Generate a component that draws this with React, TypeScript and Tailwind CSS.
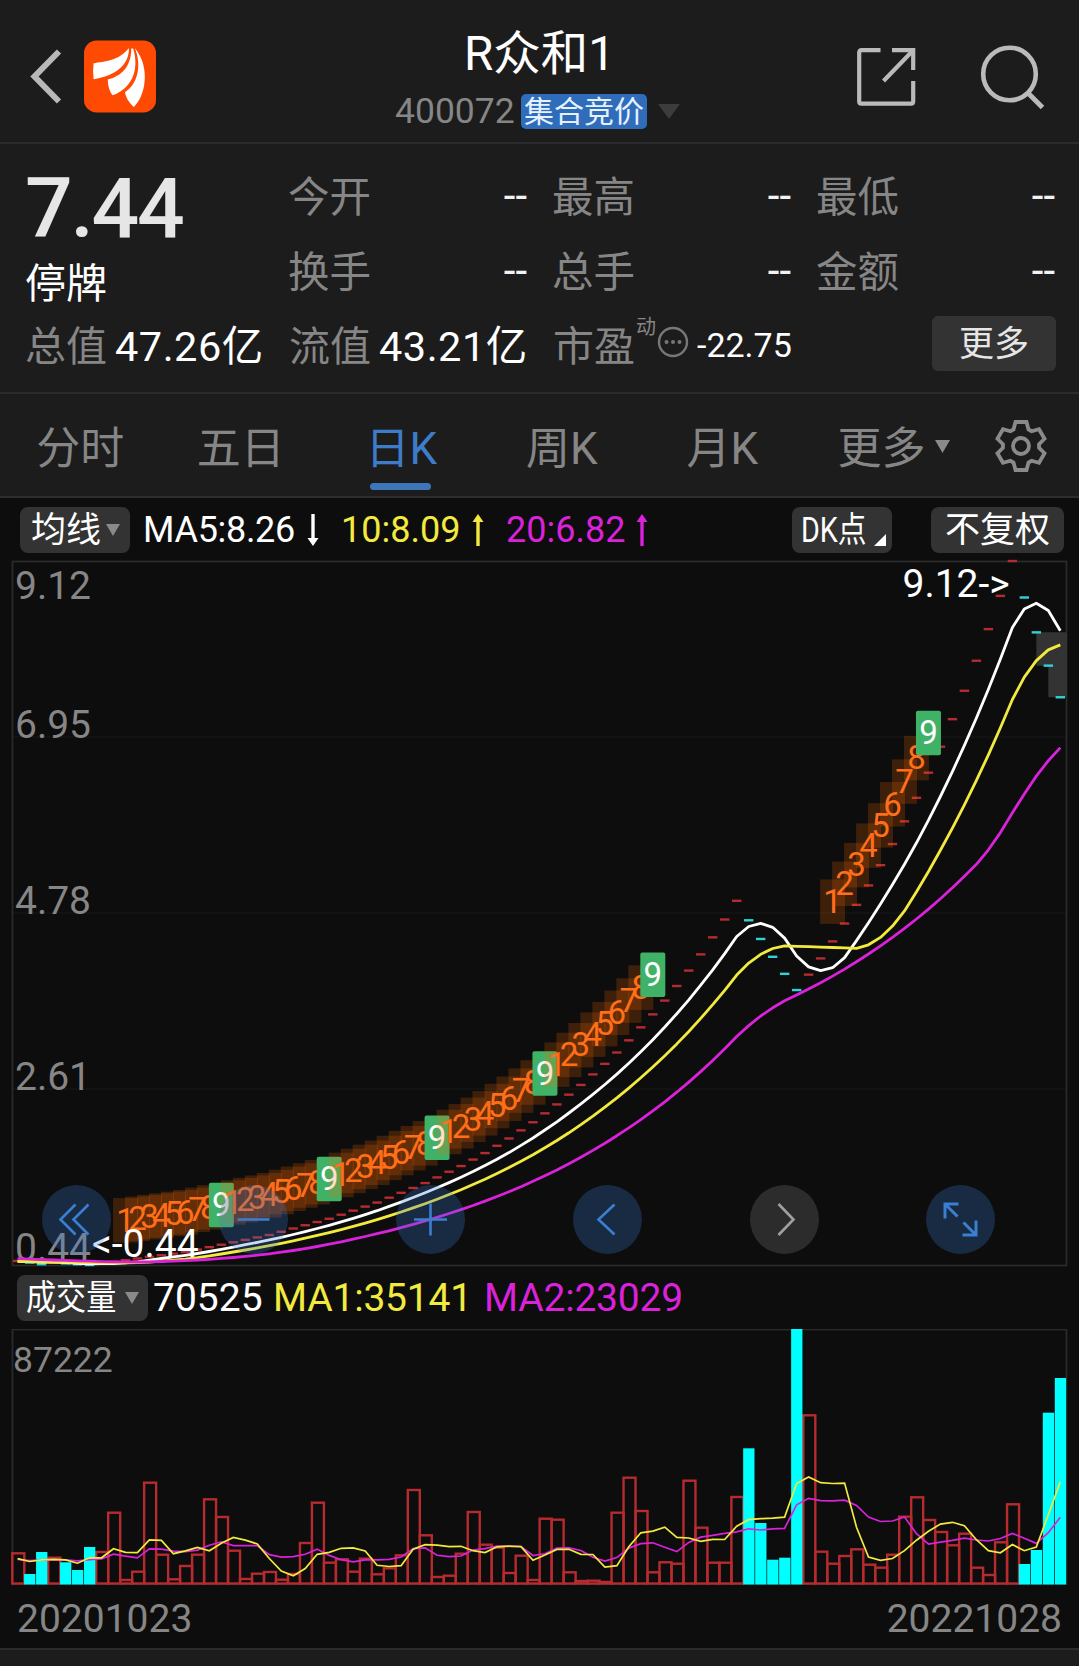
import type { ReactNode } from 'react';

const UP = '#b52b2f';
const DOWN = '#00ffff';
const YELLOW = '#f2ea3e';
const PINK = '#d922d9';

const BAR_STEP = 11.985;
const FIRST_X = 17.6;

const closes = [
  0.49, 0.47, 0.45, 0.47, 0.46, 0.45, 0.44, 0.46, 0.48, 0.5, 0.52, 0.54, 0.56, 0.58, 0.6, 0.63, 0.66, 0.69,
  0.72, 0.75, 0.78, 0.81, 0.85, 0.89, 0.93, 0.97, 1.01, 1.06, 1.11, 1.16, 1.21, 1.27, 1.33, 1.39, 1.45, 1.52,
  1.59, 1.66, 1.74, 1.82, 1.91, 2.0, 2.1, 2.2, 2.31, 2.42, 2.54, 2.66, 2.79, 2.92, 3.06, 3.21, 3.37, 3.53,
  3.7, 3.88, 4.07, 4.27, 4.48, 4.7, 4.93, 4.69, 4.46, 4.24, 4.03, 3.83, 4.02, 4.22, 4.43, 4.65, 4.88, 5.12,
  5.37, 5.63, 5.91, 6.2, 6.51, 6.83, 7.17, 7.52, 7.89, 8.28, 8.69, 9.12, 8.67, 8.24, 7.83, 7.44,
];

// closes before the first visible bar, needed by the moving averages
const prevCloses = [
  0.57, 0.57, 0.56, 0.56, 0.55, 0.55, 0.54, 0.54, 0.53, 0.53, 0.5, 0.49, 0.48, 0.48, 0.48, 0.48, 0.48, 0.48, 0.49,
];

// bar heights of the volume pane, in px (255 = 87222)
const volumes = [
  30.7, 10, 32, 26.3, 21.7, 14, 37, 32, 71.3, 4, 12.3, 101.3, 29.3, 4.7, 18, 29.3, 84.7, 67, 33.3, 5, 10.3, 12,
  4.3, 10, 41, 81.3, 21.3, 24.7, 12.3, 25.3, 9.7, 15.7, 28.7, 94, 48.7, 7, 8.3, 30.3, 72, 39.3, 36.3, 11, 28.3,
  4, 65.3, 64.3, 11.7, 3, 3.3, 2, 71.3, 106.3, 73, 11.7, 21.7, 20.3, 103.3, 56.3, 21.3, 21.3, 87, 135.7, 61,
  24.3, 26.3, 255, 168.7, 32.3, 20.3, 28, 34.7, 19.3, 16.3, 29.3, 67.3, 86.7, 64, 52, 38.7, 50.3, 16.3, 9, 41.7,
  79.7, 20, 34, 171.3, 206,
];

const downBars = new Set([1, 2, 4, 5, 6, 61, 62, 63, 64, 65, 84, 85, 86, 87]);
const countStarts = [9, 18, 27, 36, 45, 68];

const TABS = ['分时', '五日', '日K', '周K', '月K'];

const barX = (i: number) => FIRST_X + i * BAR_STEP;
const priceY = (p: number) => 704 - ((p - 0.44) * 704) / 8.68;

function average(data: number[], before: number[], n: number) {
  const all = [...before, ...data];
  return data.map((_, i) => {
    const end = i + before.length + 1;
    return all.slice(end - n, end).reduce((a, b) => a + b, 0) / n;
  });
}

function toPoints(values: number[], y: (v: number) => number) {
  return values.map((v, i) => `${barX(i).toFixed(1)},${y(v).toFixed(1)}`).join(' ');
}

function Caret({ className, w, h }: { className: string; w: number; h: number }) {
  return (
    <svg width={w} height={h} viewBox="0 0 10 10" preserveAspectRatio="none" className={className}>
      <path d="M0 0H10L5 10Z" fill="currentColor" />
    </svg>
  );
}

function Arrow({ up, className }: { up?: boolean; className: string }) {
  return (
    <svg width="12" height="32" viewBox="0 0 12 32" className={`${className} ${up ? '' : 'rotate-180'}`}>
      <path d="M6 5V32" stroke="currentColor" strokeWidth="3.4" />
      <path d="M6 0L11.5 8H0.5Z" fill="currentColor" />
    </svg>
  );
}

function Gear() {
  const pts: string[] = [];
  for (let k = 0; k < 6; k++) {
    const a = (k * Math.PI) / 3;
    for (const [x, y] of [[-7.5, -16.5], [-5.5, -24], [5.5, -24], [7.5, -16.5]]) {
      pts.push(`${x * Math.cos(a) - y * Math.sin(a)},${x * Math.sin(a) + y * Math.cos(a)}`);
    }
  }
  return (
    <svg width="54" height="54" viewBox="-27 -27 54 54" fill="none" stroke="#8a8a8a" strokeWidth="3.8">
      <polygon points={pts.join(' ')} />
      <circle r="8" />
    </svg>
  );
}

function Header() {
  return (
    <header className="flex h-[144px] border-b-2 border-[#2b2b2b]">
      <div className="flex w-[395px] pl-[29px] pt-[40px]">
        <svg width="36" height="72" viewBox="0 0 36 72" fill="none" stroke="#b8b8b8" strokeWidth="6">
          <path d="M30 11.5L5.5 36.5L30 61.5" />
        </svg>
        <svg width="72" height="73" viewBox="0 0 218 218" className="ml-[19px]">
          <rect width="218" height="218" rx="38" fill="#ff4a03" />
          <g fill="#fff">
            <path d="M29 69C62 64 106 62 136 23C138 72 96 108 29 117Q26 92 29 69Z" />
            <path d="M143 24C144 74 116 108 72 118Q72 146 86 166C140 148 170 94 149 24Z" />
            <path d="M154 23C176 78 162 132 124 157Q128 182 151 201C184 172 204 84 154 23Z" />
          </g>
        </svg>
      </div>
      <div className="w-[290px] pt-[29px]">
        <h1 className="pl-[69px] text-[47.5px] leading-[50px] text-white">R众和1</h1>
        <div className="mt-[14px] flex h-[36px] items-center">
          <span className="w-[119px] text-[35.5px] leading-[36px] text-[#868686]">400072</span>
          <span className="ml-[7px] h-[35px] w-[126px] rounded-[5px] bg-[#2f6dbb] text-center text-[30px] leading-[35px] text-[#e6f1ff]">
            集合竞价
          </span>
          <Caret w={22} h={15} className="ml-[11px] text-[#3c3c3c]" />
        </div>
      </div>
      <div className="flex flex-1 items-start pl-[171px] pt-[44px]">
        <svg width="60" height="64" viewBox="0 0 60 64" fill="none" stroke="#bababa" strokeWidth="4.2">
          <path d="M24.5 6.2H5.5Q3.2 6.2 3.2 8.5V57.5Q3.2 59.6 5.5 59.6H55Q57.2 59.6 57.2 57.5V37" />
          <path d="M36 6.2H57.2V26" />
          <path d="M56 7.5L27.5 37" />
        </svg>
        <svg width="66" height="68" viewBox="0 0 66 68" fill="none" stroke="#bababa" className="ml-[63px]">
          <circle cx="30.5" cy="30" r="26.3" strokeWidth="4.6" />
          <path d="M48.5 48.5L63.5 63.5" strokeWidth="5" />
        </svg>
      </div>
    </header>
  );
}

function Quote({ label }: { label: string }) {
  return (
    <div className="flex w-[264px] items-center justify-between pr-[24px]">
      <span className="pl-px pt-[5px] text-[41.5px] text-[#868686]">{label}</span>
      <span className="text-[42px] text-[#f2f2f2]">--</span>
    </div>
  );
}

function Summary() {
  return (
    <section className="h-[250px] border-b-2 border-[#2b2b2b] pl-[25px]">
      <div className="flex h-[165px]">
        <div className="w-[264px] pt-[19px]">
          <div className="text-[84px] font-medium leading-[92px] tracking-[-2.3px] text-[#e6e6e6]">7.44</div>
          <div className="mt-[5px] text-[41px] leading-[48px] text-white">停牌</div>
        </div>
        <div className="grid grid-cols-[264px_264px_264px] grid-rows-[75px_75px] pt-[14px]">
          {['今开', '最高', '最低', '换手', '总手', '金额'].map((l) => (
            <Quote key={l} label={l} />
          ))}
        </div>
      </div>
      <div className="flex h-[72px] items-center text-[41px] leading-[72px]">
        <div className="flex w-[264px] gap-[8px] pt-[3px]">
          <span className="text-[#868686]">总值</span>
          <span className="text-[41.5px] tracking-[0.5px] text-white">47.26亿</span>
        </div>
        <div className="flex w-[264px] gap-[8px] pt-[3px]">
          <span className="text-[#868686]">流值</span>
          <span className="text-[41.5px] tracking-[0.5px] text-white">43.21亿</span>
        </div>
        <div className="flex flex-1 items-center">
          <span className="pt-[4px] text-[#868686]">市盈</span>
          <span className="-mt-[36px] ml-px text-[20px] leading-[20px] text-[#868686]">动</span>
          <svg width="32" height="32" viewBox="-16 -16 32 32" className="-mt-[7px] ml-px" fill="#777">
            <circle r="14" fill="none" stroke="#777" strokeWidth="2.4" />
            <circle cx="-6.5" r="2" />
            <circle r="2" />
            <circle cx="6.5" r="2" />
          </svg>
          <span className="ml-[8px] text-[34px] text-white">-22.75</span>
        </div>
        <button className="-mt-[4px] mr-[23px] h-[55px] w-[124px] rounded-md bg-[#333] pt-[2px] text-[35px] leading-[54px] text-[#e6e6e6]">
          更多
        </button>
      </div>
    </section>
  );
}

function PeriodTabs() {
  return (
    <nav className="flex h-[104px] border-b-2 border-[#2e2e2e] text-[44px] leading-[111px] text-[#868686]">
      {TABS.map((t) => (
        <div key={t} className={`relative w-[160.5px] text-center ${t === '日K' ? 'text-[#3d7cc9]' : ''}`}>
          {t}
          {t === '日K' && <span className="absolute bottom-[6px] left-[49px] h-[7px] w-[61px] rounded-full bg-[#3d76b8]" />}
        </div>
      ))}
      <div className="flex w-[191px] items-start pl-[35px]">
        更多
        <Caret w={15} h={13} className="ml-[9px] mt-[46px] text-[#8a8a8a]" />
      </div>
      <div className="pt-[25px]">
        <Gear />
      </div>
    </nav>
  );
}

function Pill({ className, children }: { className: string; children: ReactNode }) {
  return (
    <span className={`flex h-[46px] items-center rounded-lg bg-[#333] text-[35px] leading-[46px] text-white ${className}`}>
      {children}
    </span>
  );
}

function AverageRow() {
  return (
    <div className="flex h-[63px] items-center text-[36px] leading-[66px]">
      <Pill className="ml-[20px] w-[110px] pl-[11px]">
        <span className="pt-[3px]">均线</span>
        <Caret w={14} h={12} className="ml-[5px] text-[#8a8a8a]" />
      </Pill>
      <span className="ml-[13px] w-[152px] pt-px tracking-[-0.3px] text-white">MA5:8.26</span>
      <Arrow className="ml-[12px] text-white" />
      <span className="ml-[22px] w-[117px] pt-px text-[#f2ea3e]">10:8.09</span>
      <Arrow up className="ml-[14px] text-[#f2ea3e]" />
      <span className="ml-[22px] w-[117px] pt-px text-[#d922d9]">20:6.82</span>
      <Arrow up className="ml-[13px] text-[#d922d9]" />
      <Pill className="ml-auto w-[100px] pl-[9px]">
        <span className="w-[68px] origin-left scale-x-[.82] whitespace-nowrap pt-[2px]">DK点</span>
        <svg width="12" height="12" viewBox="0 0 12 12" className="ml-[5px] mt-[20px]">
          <path d="M12 0V12H0Z" fill="#fff" />
        </svg>
      </Pill>
      <Pill className="ml-[39px] mr-[15px] w-[133px] justify-center">
        <span className="pt-[3px]">不复权</span>
      </Pill>
    </div>
  );
}

function CountMarks() {
  return (
    <>
      {countStarts.map((start) =>
        Array.from({ length: 9 }, (_, k) => {
          const x = barX(start + k);
          const y = priceY(closes[start + k]) - 40;
          const last = k === 8;
          return (
            <g key={start + k}>
              <rect
                x={x - 12.5}
                y={y - 22}
                width="25"
                height="44.5"
                rx={last ? 2 : 0}
                fill={last ? '#3fb268' : '#ff6a00'}
                fillOpacity={last ? 1 : 0.2}
              />
              <text x={x} y={y + 11.5} fontSize="33" textAnchor="middle" fill={last ? '#fff' : '#ff6f1c'}>
                {k + 1}
              </text>
            </g>
          );
        }),
      )}
    </>
  );
}

function RoundButton({ left, grey, children }: { left: string; grey?: boolean; children: ReactNode }) {
  return (
    <button
      className={`absolute bottom-[12px] size-[69px] rounded-full ${left} ${
        grey ? 'bg-[#e0e0e0]/15 text-[#a0a0a0]' : 'bg-[#3a7bd5]/27 text-[#3b7fd0]'
      }`}
    >
      <svg width="69" height="69" viewBox="-34.5 -34.5 69 69" fill="none" stroke="currentColor" strokeWidth="2.6">
        {children}
      </svg>
    </button>
  );
}

function PriceChart() {
  return (
    <div className="relative h-[705px]">
      <svg width="1079" height="705" viewBox="0 0 1079 705" className="overflow-visible">
        {[176, 352, 528].map((y) => (
          <path key={y} d={`M12.5 ${y}H1067`} stroke="#141414" strokeWidth="1.5" />
        ))}
        <rect x="12.5" y="0.5" width="1054" height="704" fill="none" stroke="#2a2a2a" strokeWidth="1.8" />
        <path
          d={`M${barX(85)} ${priceY(8.24)}H1067V${priceY(7.44)}H${barX(86)}V${priceY(7.83)}H${barX(85)}Z`}
          fill="#333"
        />
        <g fontSize="39" fill="#868686">
          <text x="15" y="38">9.12</text>
          <text x="15" y="176.5">6.95</text>
          <text x="15" y="353">4.78</text>
          <text x="15" y="529">2.61</text>
          <text x="15" y="699.5">0.44</text>
        </g>
        {closes.map((p, i) => (
          <rect
            key={i}
            x={barX(i) - 4.7}
            y={priceY(p) - 1.2}
            width="9.4"
            height="2.4"
            fill={downBars.has(i) ? '#2fd3d6' : UP}
          />
        ))}
        <CountMarks />
        <g fill="none" strokeWidth="2.8" strokeLinejoin="round">
          <polyline points={toPoints(average(closes, prevCloses, 5), priceY)} stroke="#fff" />
          <polyline points={toPoints(average(closes, prevCloses, 10), priceY)} stroke={YELLOW} />
          <polyline points={toPoints(average(closes, prevCloses, 20), priceY)} stroke={PINK} />
        </g>
        <g fontSize="39" fill="#fff">
          <text x="902.5" y="36">{'9.12->'}</text>
          <text x="92" y="695.5">{'<-0.44'}</text>
        </g>
      </svg>
      <RoundButton left="left-[42px]">
        <path d="M-1 -15L-16 0L-1 15M12 -15L-3 0L12 15" />
      </RoundButton>
      <RoundButton left="left-[219px]">
        <path d="M-16 0H16" />
      </RoundButton>
      <RoundButton left="left-[396px]">
        <path d="M-16.5 0H16.5M0 -16V16" />
      </RoundButton>
      <RoundButton left="left-[572.5px]">
        <path d="M7 -15L-9 0L7 15" />
      </RoundButton>
      <RoundButton left="left-[749.5px]" grey>
        <path d="M-6 -15.5L9 0L-6 15.5" />
      </RoundButton>
      <RoundButton left="left-[926px]">
        <path d="M-2 -15.5H-15.5V-1M-15.5 -15.5L-3 -3M2 15.5H15.5V1M15.5 15.5L3 3" strokeWidth="3" />
      </RoundButton>
    </div>
  );
}

function VolumeChart() {
  const before = Array(9).fill(24);
  const y = (v: number) => 255 - v;
  return (
    <svg width="1079" height="257" viewBox="0 0 1079 257" className="block">
      <rect x="12.5" y="0.5" width="1054" height="254.5" fill="none" stroke="#2a2a2a" strokeWidth="1.8" />
      <text x="13" y="43" fontSize="35.5" fill="#868686">
        87222
      </text>
      {volumes.map((v, i) =>
        downBars.has(i) ? null : (
          <rect key={i} x={barX(i) - 5.3} y={y(v)} width="12" height={v - 0.5} fill="none" stroke={UP} strokeWidth="2.4" />
        ),
      )}
      {volumes.map((v, i) =>
        downBars.has(i) ? <rect key={i} x={barX(i) - 5.5} y={y(v)} width="11.3" height={v + 0.5} fill={DOWN} /> : null,
      )}
      <g fill="none" strokeWidth="1.7">
        <polyline points={toPoints(average(volumes, before, 10), y)} stroke={PINK} />
        <polyline points={toPoints(average(volumes, before, 5), y)} stroke={YELLOW} />
      </g>
    </svg>
  );
}

export default function App() {
  return (
    <div className="h-[1666px] w-[1079px] overflow-hidden bg-[#1c1c1c] font-[Roboto,'Noto_Sans_CJK_SC',sans-serif]">
      <Header />
      <Summary />
      <PeriodTabs />
      <main className="h-[1152px] border-b-2 border-[#2b2b2b] bg-[#0d0d0d]">
        <AverageRow />
        <PriceChart />
        <div className="flex h-[63px] items-center text-[39px] leading-[63px]">
          <Pill className="ml-[17px] w-[131px] pl-[9px]">
            <span className="w-[93px] origin-left scale-x-[.86] whitespace-nowrap pt-[3px]">成交量</span>
            <Caret w={14} h={12} className="ml-[6px] text-[#8a8a8a]" />
          </Pill>
          <span className="ml-[5px] w-[120px] pt-[2px] text-white">70525</span>
          <span className="w-[211px] pt-[2px] tracking-[-0.2px] text-[#f2ea3e]">MA1:35141</span>
          <span className="pt-[2px] tracking-[-0.2px] text-[#d922d9]">MA2:23029</span>
        </div>
        <VolumeChart />
        <div className="flex h-[62px] justify-between pl-[17px] pr-[17px] text-[39px] leading-[66px] text-[#868686]">
          <span>20201023</span>
          <span>20221028</span>
        </div>
      </main>
    </div>
  );
}
